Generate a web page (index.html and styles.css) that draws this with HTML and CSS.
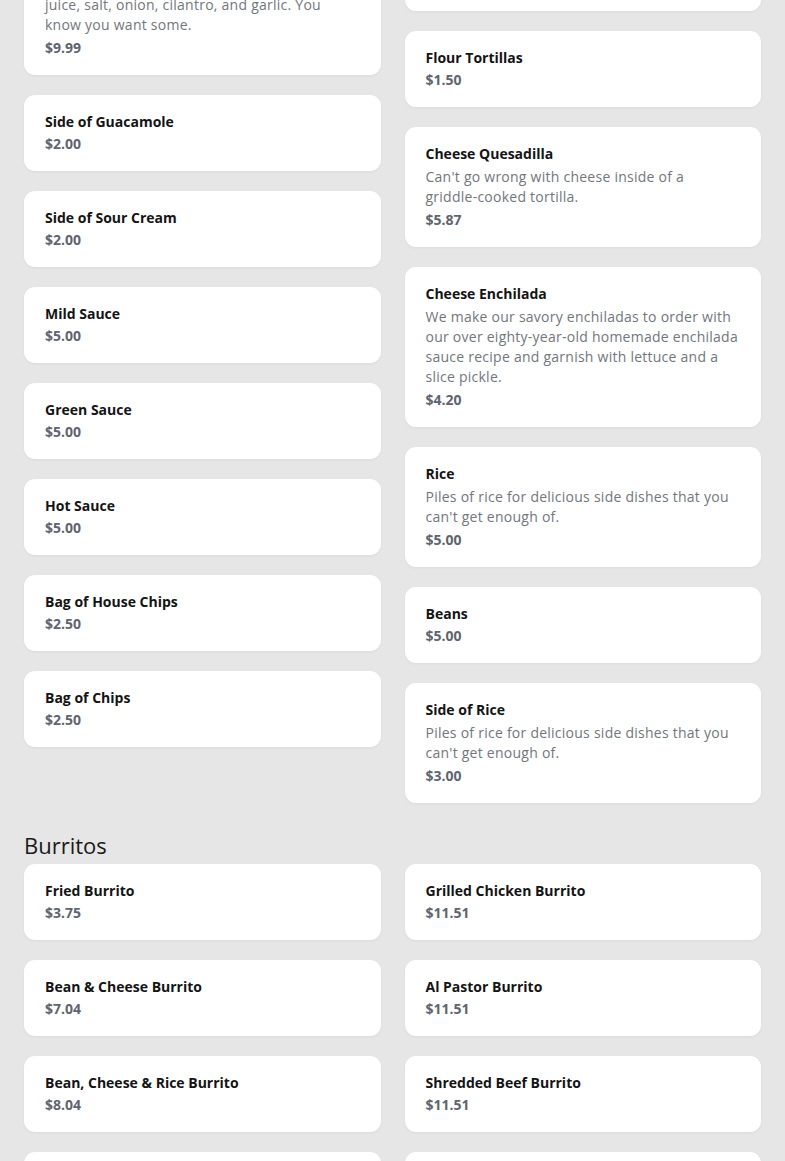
FILE: index.html
```html
<!DOCTYPE html>
<html lang="en">
<head>
<meta charset="utf-8">
<title>Menu</title>
<link rel="stylesheet" href="styles.css">
</head>
<body>
<main class="menu">
  <section class="category">
    <h2 class="category-title">Sides</h2>
    <div class="grid">
      <div class="col">
        <div class="card">
          <h3 class="item-name">Guacamole</h3>
          <p class="item-desc">Fresh avocados mashed with a bit of lime juice, salt, onion, cilantro, and garlic. You know you want some.</p>
          <p class="item-price">$9.99</p>
        </div>
        <div class="card"><h3 class="item-name">Side of Guacamole</h3><p class="item-price">$2.00</p></div>
        <div class="card"><h3 class="item-name">Side of Sour Cream</h3><p class="item-price">$2.00</p></div>
        <div class="card"><h3 class="item-name">Mild Sauce</h3><p class="item-price">$5.00</p></div>
        <div class="card"><h3 class="item-name">Green Sauce</h3><p class="item-price">$5.00</p></div>
        <div class="card"><h3 class="item-name">Hot Sauce</h3><p class="item-price">$5.00</p></div>
        <div class="card"><h3 class="item-name">Bag of House Chips</h3><p class="item-price">$2.50</p></div>
        <div class="card"><h3 class="item-name">Bag of Chips</h3><p class="item-price">$2.50</p></div>
      </div>
      <div class="col">
        <div class="card"><h3 class="item-name">Corn Tortillas</h3><p class="item-price">$1.50</p></div>
        <div class="card"><h3 class="item-name">Flour Tortillas</h3><p class="item-price">$1.50</p></div>
        <div class="card">
          <h3 class="item-name">Cheese Quesadilla</h3>
          <p class="item-desc">Can't go wrong with cheese inside of a griddle-cooked tortilla.</p>
          <p class="item-price">$5.87</p>
        </div>
        <div class="card">
          <h3 class="item-name">Cheese Enchilada</h3>
          <p class="item-desc">We make our savory enchiladas to order with our over eighty-year-old homemade enchilada sauce recipe and garnish with lettuce and a slice pickle.</p>
          <p class="item-price">$4.20</p>
        </div>
        <div class="card">
          <h3 class="item-name">Rice</h3>
          <p class="item-desc">Piles of rice for delicious side dishes that you can't get enough of.</p>
          <p class="item-price">$5.00</p>
        </div>
        <div class="card"><h3 class="item-name">Beans</h3><p class="item-price">$5.00</p></div>
        <div class="card">
          <h3 class="item-name">Side of Rice</h3>
          <p class="item-desc">Piles of rice for delicious side dishes that you can't get enough of.</p>
          <p class="item-price">$3.00</p>
        </div>
      </div>
    </div>
  </section>

  <section class="category">
    <h2 class="category-title">Burritos</h2>
    <div class="grid">
      <div class="col">
        <div class="card"><h3 class="item-name">Fried Burrito</h3><p class="item-price">$3.75</p></div>
        <div class="card"><h3 class="item-name">Bean &amp; Cheese Burrito</h3><p class="item-price">$7.04</p></div>
        <div class="card"><h3 class="item-name">Bean, Cheese &amp; Rice Burrito</h3><p class="item-price">$8.04</p></div>
        <div class="card"><h3 class="item-name">Chicken Burrito</h3><p class="item-price">$11.51</p></div>
      </div>
      <div class="col">
        <div class="card"><h3 class="item-name">Grilled Chicken Burrito</h3><p class="item-price">$11.51</p></div>
        <div class="card"><h3 class="item-name">Al Pastor Burrito</h3><p class="item-price">$11.51</p></div>
        <div class="card"><h3 class="item-name">Shredded Beef Burrito</h3><p class="item-price">$11.51</p></div>
        <div class="card"><h3 class="item-name">Carne Asada Burrito</h3><p class="item-price">$11.51</p></div>
      </div>
    </div>
  </section>
</main>
</body>
</html>
```
FILE: styles.css
```css
html, body {
  margin: 0;
  padding: 0;
  background: #e6e6e6;
}

body {
  font-family: "Open Sans", "Noto Sans", sans-serif;
  color: #111111;
  overflow: hidden;
}

.menu {
  padding: 0 24px 40px;
  margin-top: -100px;
  display: flex;
  flex-direction: column;
  gap: 26px;
}

.category-title {
  margin: 0 0 3px;
  font-size: 22px;
  line-height: 32px;
  font-weight: 400;
  color: #1a1a1a;
}

.grid {
  display: grid;
  grid-template-columns: 1fr 1fr;
  column-gap: 24px;
  align-items: start;
}

.col {
  display: flex;
  flex-direction: column;
  gap: 20px;
}

.card {
  background: #ffffff;
  border-radius: 11px;
  padding: 17px 23px 15px 21px;
  box-shadow: 0 1px 3px rgba(0, 0, 0, 0.05);
}

.item-name {
  margin: 0;
  font-size: 14px;
  line-height: 20px;
  font-weight: 700;
  color: #141414;
}

.item-desc {
  margin: 3px 0 1px;
  font-size: 14px;
  line-height: 20px;
  font-weight: 400;
  letter-spacing: 0.25px;
  color: #72767d;
}

.item-price {
  margin: 0;
  font-size: 14px;
  line-height: 24px;
  font-weight: 700;
  color: #5e6570;
}
```
